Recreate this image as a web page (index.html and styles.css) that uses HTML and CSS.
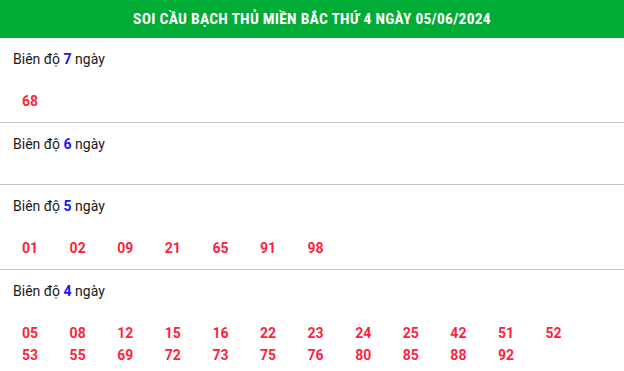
FILE: index.html
```html
<!DOCTYPE html>
<html lang="vi">
<head>
<meta charset="utf-8">
<link rel="stylesheet" href="styles.css">
</head>
<body>
<div class="box">
  <div class="title"><span class="title-text">SOI CẦU BẠCH THỦ MIỀN BẮC THỨ 4 NGÀY 05/06/2024</span></div>
  <div class="sec">
    <div class="label">Biên độ <b>7</b> ngày</div>
    <div class="nums"><span>68</span></div>
  </div>
  <div class="sec">
    <div class="label">Biên độ <b>6</b> ngày</div>
    <div class="nums"></div>
  </div>
  <div class="sec">
    <div class="label">Biên độ <b>5</b> ngày</div>
    <div class="nums"><span>01</span><span>02</span><span>09</span><span>21</span><span>65</span><span>91</span><span>98</span></div>
  </div>
  <div class="sec">
    <div class="label">Biên độ <b>4</b> ngày</div>
    <div class="nums"><span>05</span><span>08</span><span>12</span><span>15</span><span>16</span><span>22</span><span>23</span><span>24</span><span>25</span><span>42</span><span>51</span><span>52</span><span>53</span><span>55</span><span>69</span><span>72</span><span>73</span><span>75</span><span>76</span><span>80</span><span>85</span><span>88</span><span>92</span></div>
  </div>
</div>
</body>
</html>
```
FILE: styles.css
```css
html, body { margin: 0; padding: 0; background: #fff; }
body { font-family: Roboto, "Liberation Sans", sans-serif; color: #1a1a1a; }
.box { width: 624px; }
.title {
  background: #00ab36;
  height: 38px;
  display: flex;
  align-items: center;
  justify-content: center;
}
.title-text {
  color: #fff;
  font-weight: 700;
  font-size: 15.5px;
  font-stretch: condensed;
  letter-spacing: 0.25px;
  white-space: nowrap;
}
.sec { border-bottom: 1px solid #c6c6c6; padding-top: 11px; }
.sec:last-child { border-bottom: none; }
.label { font-size: 14px; line-height: 20px; padding-left: 13px; }
.label b { color: #1414ff; font-weight: 700; }
.nums {
  display: flex;
  flex-wrap: wrap;
  margin-top: 21px;
  padding: 0 0 9.5px 22px;
}
.nums span {
  width: 47.6px;
  font-size: 14px;
  line-height: 22px;
  font-weight: 700;
  color: #ff1f3c;
}
```
